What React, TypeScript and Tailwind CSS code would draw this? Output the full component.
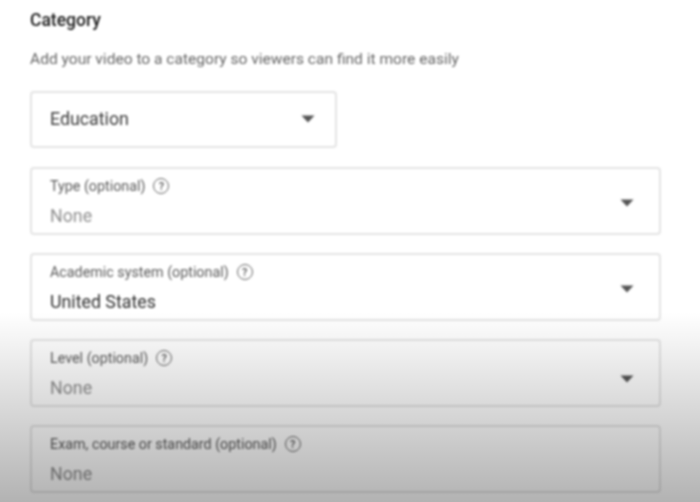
const fields = [
  { label: "Type (optional)", value: "None", muted: true, arrow: "mt-[5px]" },
  { label: "Academic system (optional)", value: "United States", muted: false, arrow: "mt-[5px]" },
  { label: "Level (optional)", value: "None", muted: true, arrow: "mt-[12px]" },
  { label: "Exam, course or standard (optional)", value: "None", muted: true, arrow: "" },
];

function Arrow({ className = "" }: { className?: string }) {
  return (
    <svg width="14" height="8" viewBox="0 0 14 8" className={"shrink-0 " + className}>
      <path d="M0.5 0.5H13.5L7 7.5Z" fill="#555" />
    </svg>
  );
}

function HelpIcon() {
  return (
    <span className="flex h-4 w-4 items-center justify-center rounded-full border border-[#666] text-[11px] leading-none font-medium text-[#555]">
      ?
    </span>
  );
}

export default function App() {
  return (
    <div className="relative h-[502px] w-[700px] overflow-hidden bg-white font-['Roboto',sans-serif]">
      <div className="flex h-full flex-col pt-[10px] pr-[39px] pl-[30px] blur-[0.8px]">
        <h2 className="text-[17.5px] leading-[20px] font-medium text-[#1a1a1a]">Category</h2>
        <p className="mt-[19px] text-[15.55px] leading-[20px] text-[#666]">
          Add your video to a category so viewers can find it more easily
        </p>
        <div className="mt-[22px] flex h-[57px] w-[307px] items-center justify-between rounded border-2 border-[#e4e4e4] pr-[20px] pl-[18px]">
          <span className="text-[17.8px] text-[#3a3a3a]">Education</span>
          <Arrow className="-mt-[2px]" />
        </div>
        <div className="mt-[19px] flex flex-col gap-[18.5px]">
          {fields.map((f) => (
            <div
              key={f.label}
              className="flex h-[67.5px] items-center justify-between rounded border-2 border-[#e4e4e4] pr-[25px] pl-[18px]"
            >
              <div className="flex flex-col">
                <div className="mt-[1px] flex items-center gap-[8px] text-[14.3px] leading-[20px] text-[#5c5c5c]">
                  {f.label}
                  <HelpIcon />
                </div>
                <span
                  className={
                    f.muted
                      ? "mt-[10px] text-[17.8px] leading-[20px] text-[#909090]"
                      : "mt-[10px] text-[17.8px] leading-[20px] text-[#2e2e2e]"
                  }
                >
                  {f.value}
                </span>
              </div>
              {f.arrow && <Arrow className={f.arrow} />}
            </div>
          ))}
        </div>
      </div>
      <div className="pointer-events-none absolute inset-x-0 bottom-0 h-[190px] bg-gradient-to-b from-black/0 to-black/30" />
    </div>
  );
}
